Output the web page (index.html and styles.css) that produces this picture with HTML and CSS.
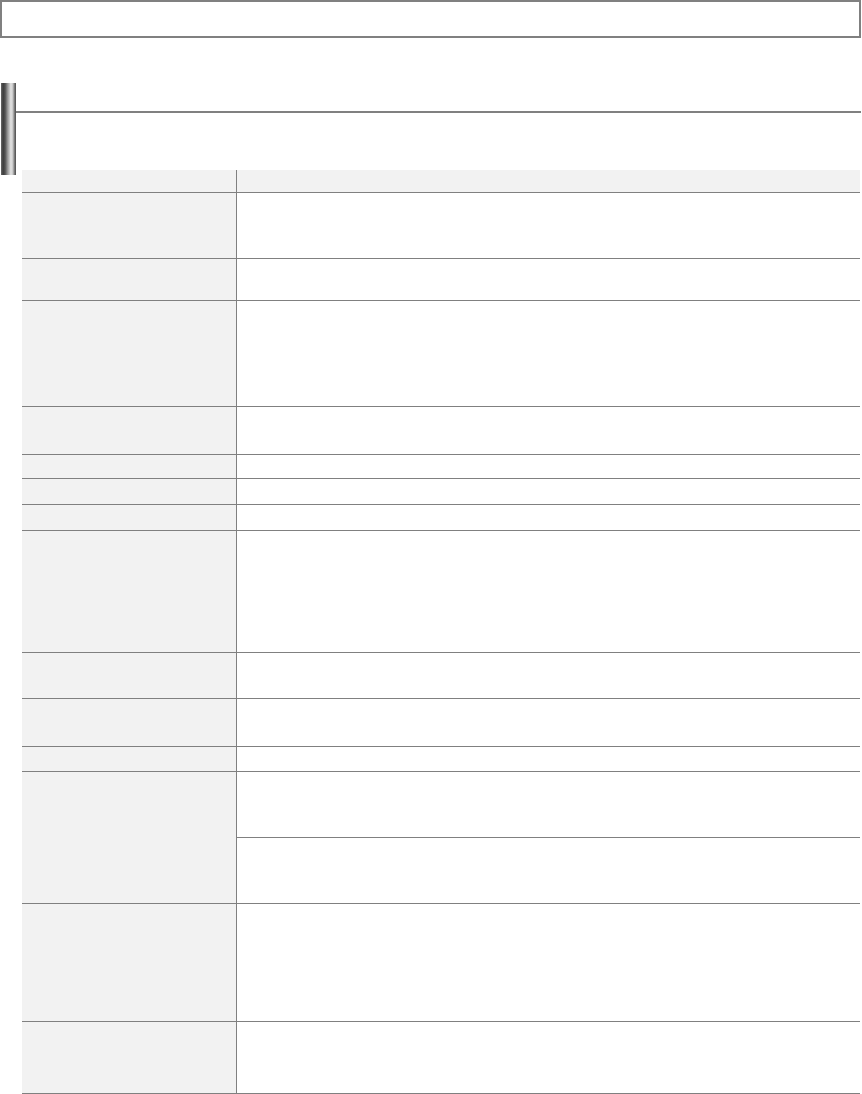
FILE: index.html
```html
<!DOCTYPE html>
<html>
<head>
<meta charset="utf-8">
<link rel="stylesheet" href="styles.css">
</head>
<body>
<div class="topbox"></div>
<div class="section">
  <div class="bar"></div>
  <div class="main">
    <div class="title"></div>
    <div class="table">
      <div class="row head h23"><div class="k"></div><div class="v"></div></div>
      <div class="row h66"><div class="k"></div><div class="v"></div></div>
      <div class="row h42"><div class="k"></div><div class="v"></div></div>
      <div class="row h106"><div class="k"></div><div class="v"></div></div>
      <div class="row h48"><div class="k"></div><div class="v"></div></div>
      <div class="row h24"><div class="k"></div><div class="v"></div></div>
      <div class="row h26"><div class="k"></div><div class="v"></div></div>
      <div class="row h26"><div class="k"></div><div class="v"></div></div>
      <div class="row h122"><div class="k"></div><div class="v"></div></div>
      <div class="row h46"><div class="k"></div><div class="v"></div></div>
      <div class="row h48"><div class="k"></div><div class="v"></div></div>
      <div class="row h25"><div class="k"></div><div class="v"></div></div>
      <div class="row h132"><div class="k"></div><div class="v split"><div class="sub"></div><div class="sub"></div></div></div>
      <div class="row h118"><div class="k"></div><div class="v"></div></div>
      <div class="row h72"><div class="k"></div><div class="v"></div></div>
    </div>
  </div>
</div>
</body>
</html>
```
FILE: styles.css
```css
* { box-sizing: border-box; }
html, body { margin: 0; padding: 0; background: #fff; }
body { font-family: "Liberation Sans", Arial, sans-serif; font-size: 12px; color: #333; width: 862px; height: 1094px; overflow: hidden; }

.topbox {
  width: 861px;
  height: 38px;
  border: 2px solid #808080;
}

.section {
  display: flex;
  margin-top: 45px;
}

.bar {
  flex: 0 0 15px;
  height: 92px;
  margin-left: 1px;
  background: linear-gradient(to right, #6a6a6a 0%, #3c3c3c 14%, #555 28%, #9a9a9a 45%, #e4e4e4 66%, #c8c8c8 78%, #7a7a7a 90%, #4a4a4a 100%);
}

.main {
  flex: 1;
  margin-right: 1px;
}

.title {
  height: 30px;
  border-bottom: 2px solid #808080;
}

.table {
  margin-top: 57px;
  margin-left: 6px;
  margin-right: 1px;
}

.row {
  display: grid;
  grid-template-columns: 215px 1fr;
  border-bottom: 1px solid #808080;
}

.row .k {
  background: #f2f2f2;
  border-right: 1px solid #808080;
}

.row .v { background: #fff; }
.row.head .v { background: #f2f2f2; }

.v.split {
  display: flex;
  flex-direction: column;
}
.v.split .sub { flex: 1; }
.v.split .sub + .sub { border-top: 1px solid #808080; }

.h23 { height: 23px; }
.h24 { height: 24px; }
.h25 { height: 25px; }
.h26 { height: 26px; }
.h42 { height: 42px; }
.h46 { height: 46px; }
.h48 { height: 48px; }
.h66 { height: 66px; }
.h72 { height: 72px; }
.h106 { height: 106px; }
.h118 { height: 118px; }
.h122 { height: 122px; }
.h132 { height: 132px; }
```
